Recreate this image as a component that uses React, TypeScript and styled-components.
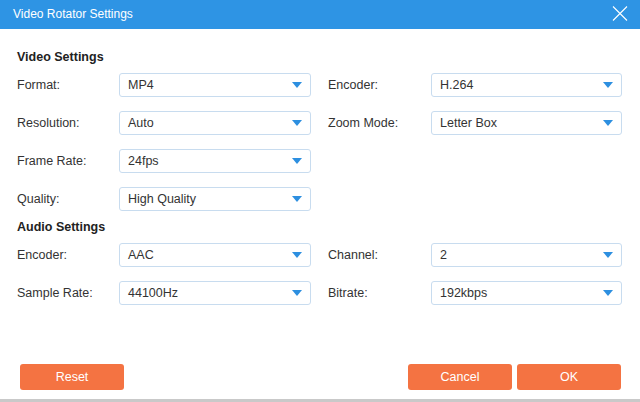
import React, { FC } from 'react';
import styled, { createGlobalStyle } from 'styled-components';

const GlobalStyle = createGlobalStyle`
  html, body {
    margin: 0;
    padding: 0;
    background: #ffffff;
  }
  body {
    font-family: 'Liberation Sans', Arial, sans-serif;
    color: #333333;
  }
`;

type Field = { label: string; value: string };
type Row = { left: Field; right?: Field };

const videoRows: Row[] = [
  { left: { label: 'Format:', value: 'MP4' }, right: { label: 'Encoder:', value: 'H.264' } },
  { left: { label: 'Resolution:', value: 'Auto' }, right: { label: 'Zoom Mode:', value: 'Letter Box' } },
  { left: { label: 'Frame Rate:', value: '24fps' } },
  { left: { label: 'Quality:', value: 'High Quality' } },
];

const audioRows: Row[] = [
  { left: { label: 'Encoder:', value: 'AAC' }, right: { label: 'Channel:', value: '2' } },
  { left: { label: 'Sample Rate:', value: '44100Hz' }, right: { label: 'Bitrate:', value: '192kbps' } },
];

const Select: FC<{ value: string }> = ({ value }) => (
  <SelectBox>
    <span>{value}</span>
    <svg width="10" height="6" viewBox="0 0 10 6">
      <path d="M0 0 H10 L5 6 Z" fill="#2d8fe0" />
    </svg>
  </SelectBox>
);

const Section: FC<{ title: string; rows: Row[] }> = ({ title, rows }) => (
  <SectionWrap>
    <Heading>{title}</Heading>
    <Grid>
      {rows.map((r, i) => (
        <React.Fragment key={i}>
          <Label>{r.left.label}</Label>
          <Select value={r.left.value} />
          {r.right ? (
            <>
              <Label $right>{r.right.label}</Label>
              <Select value={r.right.value} />
            </>
          ) : (
            <>
              <span />
              <span />
            </>
          )}
        </React.Fragment>
      ))}
    </Grid>
  </SectionWrap>
);

const App: FC = () => {
  return (
    <Dialog>
      <GlobalStyle />
      <TitleBar>
        <span>Video Rotator Settings</span>
        <CloseIcon width="16" height="15" viewBox="0 0 16 15">
          <path d="M1 0.5 L15 14.5 M15 0.5 L1 14.5" stroke="#ffffff" strokeWidth="1.1" fill="none" />
        </CloseIcon>
      </TitleBar>
      <Body>
        <Section title="Video Settings" rows={videoRows} />
        <Section title="Audio Settings" rows={audioRows} />
      </Body>
      <Footer>
        <Button>Reset</Button>
        <div className="right">
          <Button>Cancel</Button>
          <Button>OK</Button>
        </div>
      </Footer>
    </Dialog>
  );
};

const Dialog = styled.div`
  width: 640px;
  height: 402px;
  display: flex;
  flex-direction: column;
  background: #ffffff;
  border-bottom: 3px solid #c9c9c9;
  box-sizing: border-box;
`;

const TitleBar = styled.div`
  height: 29px;
  flex: none;
  background-color: #2e94e4;
  color: #ffffff;
  display: flex;
  align-items: center;
  justify-content: space-between;
  padding: 0 13px 0 13px;
  font-size: 12px;
  > span {
    margin-top: -1px;
  }
`;

const CloseIcon = styled.svg`
  display: block;
  margin-right: -1px;
  margin-top: -2px;
`;

const Body = styled.div`
  flex: 1;
  padding: 20px 18px 0 17px;
  display: flex;
  flex-direction: column;
  gap: 8px;
`;

const SectionWrap = styled.div`
  display: flex;
  flex-direction: column;
  gap: 8px;
`;

const Heading = styled.div`
  font-weight: bold;
  font-size: 12.5px;
  line-height: 16px;
  color: #222222;
`;

const Grid = styled.div`
  display: grid;
  grid-template-columns: 102px 192px 120px 191px;
  row-gap: 14px;
  align-items: center;
`;

const Label = styled.div<{ $right?: boolean }>`
  font-size: 12.5px;
  color: #333333;
  margin-left: ${({ $right }) => ($right ? '17px' : '0')};
`;

const SelectBox = styled.div`
  height: 24px;
  box-sizing: border-box;
  border: 1px solid #c8dcef;
  border-radius: 3px;
  display: flex;
  align-items: center;
  justify-content: space-between;
  padding: 0 8px 0 8px;
  font-size: 12.5px;
  color: #333333;
  background: #ffffff;
`;

const Footer = styled.div`
  flex: none;
  display: flex;
  justify-content: space-between;
  padding: 0 19px 9px 20px;
  .right {
    display: flex;
    gap: 5px;
  }
`;

const Button = styled.button`
  width: 104px;
  height: 26px;
  border: none;
  border-radius: 3px;
  background-color: #f47342;
  color: #ffffff;
  font-family: 'Liberation Sans', Arial, sans-serif;
  font-size: 12.5px;
  padding: 0;
`;

export default App;
